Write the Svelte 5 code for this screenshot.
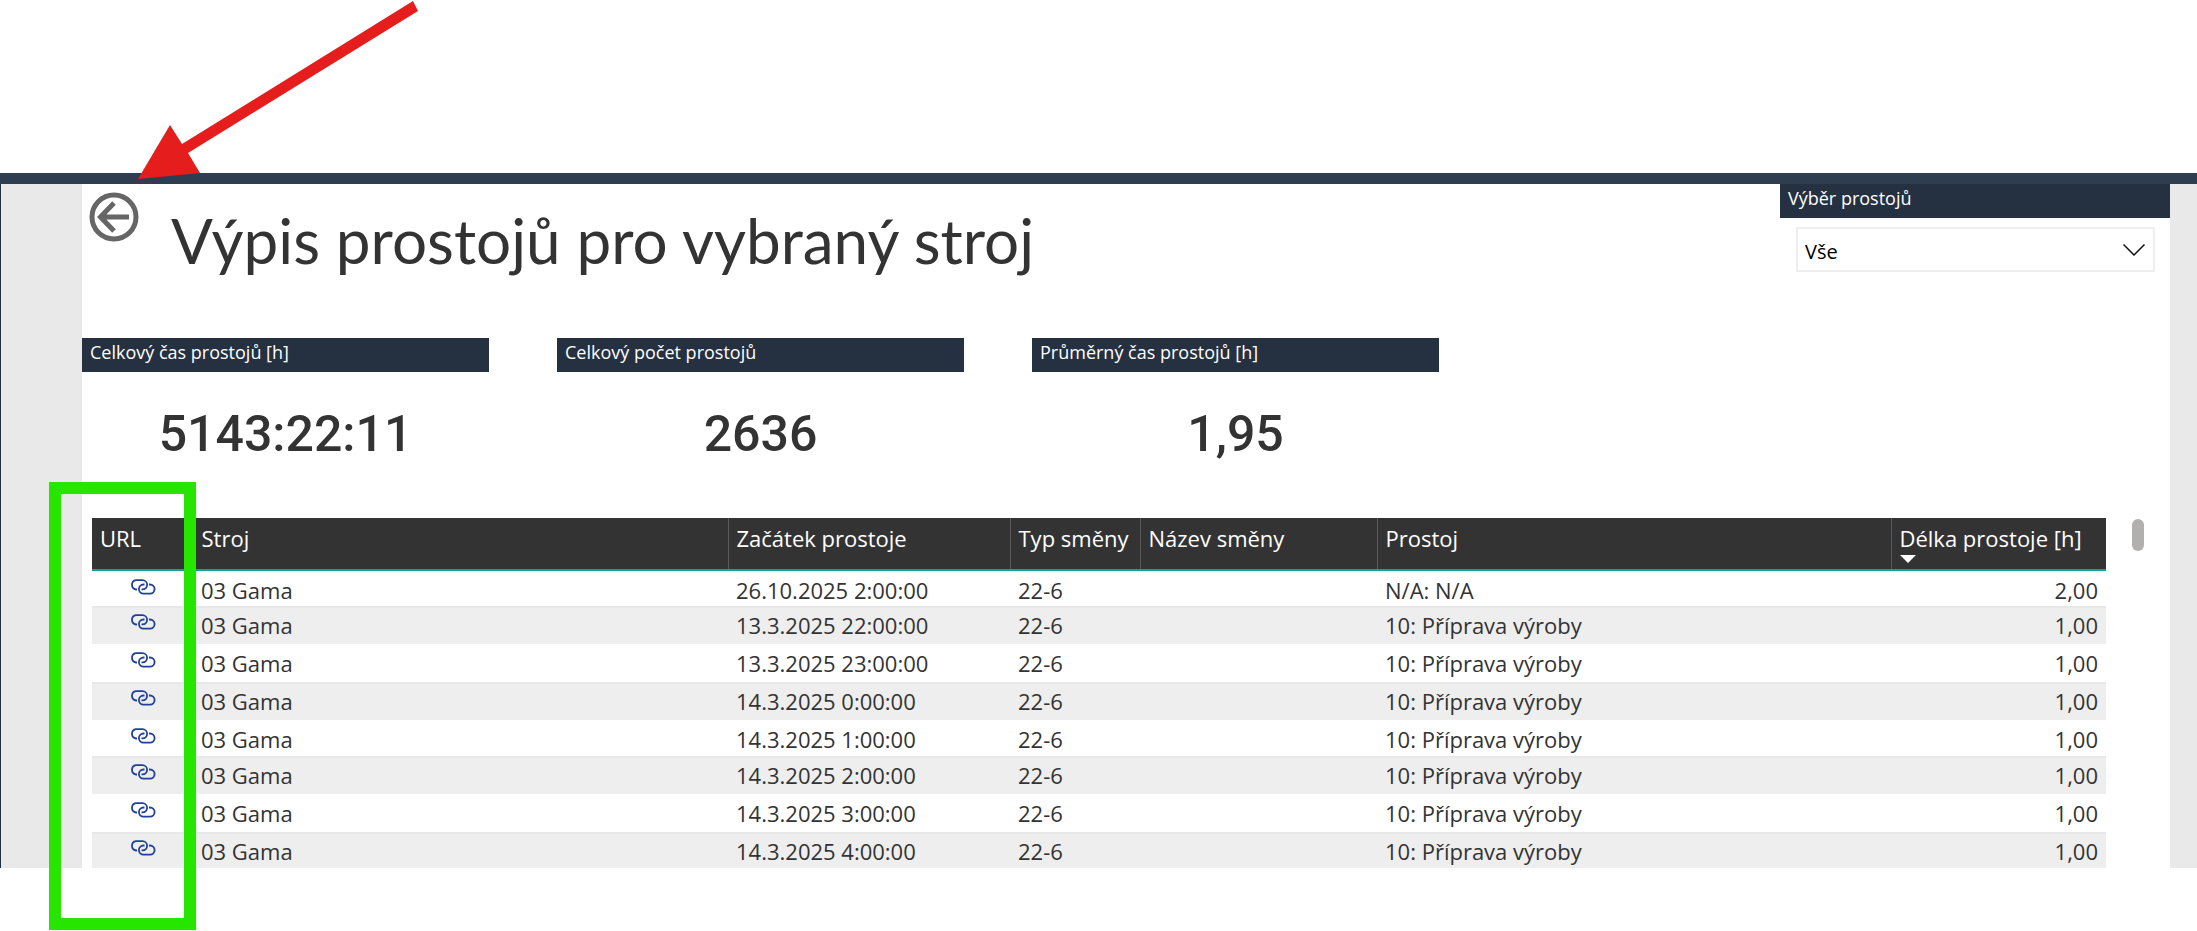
<script>
  const cards = [
    { label: "Celkový čas prostojů [h]", value: "5143:22:11" },
    { label: "Celkový počet prostojů", value: "2636" },
    { label: "Průměrný čas prostojů [h]", value: "1,95" }
  ];

  const columns = [
    { key: "url", label: "URL" },
    { key: "machine", label: "Stroj" },
    { key: "start", label: "Začátek prostoje" },
    { key: "shift", label: "Typ směny" },
    { key: "name", label: "Název směny" },
    { key: "reason", label: "Prostoj" },
    { key: "hours", label: "Délka prostoje [h]" }
  ];

  const starts = [
    "13.3.2025 22:00:00",
    "13.3.2025 23:00:00",
    "14.3.2025 0:00:00",
    "14.3.2025 1:00:00",
    "14.3.2025 2:00:00",
    "14.3.2025 3:00:00",
    "14.3.2025 4:00:00"
  ];

  const rows = [
    { start: "26.10.2025 2:00:00", reason: "N/A: N/A", hours: "2,00" },
    ...starts.map(start => ({ start, reason: "10: Příprava výroby", hours: "1,00" }))
  ];

  let selected = $state("all");
</script>

<main>
  <div class="topbar"></div>
  <div class="report">
    <section class="page">
      <header>
        <button class="back" aria-label="Zpět">
          <svg viewBox="0 0 50 50" width="50" height="50">
            <circle cx="25" cy="25" r="22" />
            <path d="M40 25H12M25 11L11.500 25L25 39" />
          </svg>
        </button>
        <h1>Výpis prostojů pro vybraný stroj</h1>
        <div class="slicer">
          <label class="bar" for="downtime">Výběr prostojů</label>
          <div class="dropdown">
            <select id="downtime" bind:value={selected}>
              <option value="all">Vše</option>
            </select>
            <svg viewBox="0 0 22 12" width="22" height="12"><path d="M.5 .5L11 11L21.500 .5" /></svg>
          </div>
        </div>
      </header>

      <div class="cards">
        {#each cards as card}
          <div class="card">
            <h2 class="bar">{card.label}</h2>
            <p>{card.value}</p>
          </div>
        {/each}
      </div>

      <div class="listing">
        <table>
          <colgroup>
            {#each columns as col}
              <col class={col.key} />
            {/each}
          </colgroup>
          <thead>
            <tr>
              {#each columns as col}
                <th>
                  <div class="heading">
                    {col.label}
                    {#if col.key === "hours"}
                      <span class="sort"></span>
                    {/if}
                  </div>
                </th>
              {/each}
            </tr>
          </thead>
          <tbody>
            {#each rows as row}
              <tr>
                <td class="link">
                  <a href="#detail" aria-label="Detail prostoje">
                    <svg viewBox="0 0 26 16" width="26" height="16">
                      <path d="M7 10.500H6A4.700 4.700 0 0 1 6 1.200H12.500A4.600 4.600 0 0 1 12.500 10.400H11.500" />
                      <path d="M19 5.500H20A4.600 4.600 0 0 1 20 14.700H13.500A4.600 4.600 0 0 1 13.500 5.500H14.500" />
                    </svg>
                  </a>
                </td>
                <td>03 Gama</td>
                <td>{row.start}</td>
                <td>22-6</td>
                <td></td>
                <td>{row.reason}</td>
                <td class="number">{row.hours}</td>
              </tr>
            {/each}
          </tbody>
        </table>
        <div class="thumb"></div>
      </div>
    </section>
  </div>

  <!-- annotations over the report -->
  <svg class="arrow" viewBox="0 0 430 190" width="430" height="190">
    <path d="M413 1L418 11L188 153L200 173L138 179L170 125L182 144Z" />
  </svg>
  <div class="highlight"></div>
</main>

<style>
  :global(body) {
    margin: 0;
    background: #fff;
  }
  main {
    position: relative;
    padding: 173px 0 62px;
    font-family: "Open Sans", "Noto Sans", sans-serif;
    color: #333;
  }
  .topbar {
    height: 11px;
    background: #2e3e50;
  }
  .report {
    padding: 0 27px 0 81px;
    border-left: 1px solid #253141;
    background: #e9e9e9;
  }
  .page {
    background: #fff;
  }
  header {
    display: flex;
    align-items: flex-start;
    height: 154px;
  }
  .back {
    margin: 8px 0 0 7px;
    padding: 0;
    border: 0;
    background: none;
    cursor: pointer;
  }
  .back svg {
    display: block;
    fill: none;
    stroke: #666;
    stroke-width: 5;
  }
  h1 {
    margin: 10px 0 0 32px;
    font-family: Lato, "Open Sans", sans-serif;
    font-size: 62px;
    line-height: 92px;
    font-weight: 400;
    white-space: nowrap;
  }
  .bar {
    display: block;
    box-sizing: border-box;
    height: 34px;
    margin: 0;
    padding: 0 8px;
    background: #253141;
    color: #fff;
    font-size: 18px;
    line-height: 28px;
    font-weight: 400;
  }
  .slicer {
    width: 390px;
    margin-left: auto;
  }
  .dropdown {
    position: relative;
    margin: 9px 15px 0 16px;
  }
  select {
    display: block;
    width: 100%;
    height: 45px;
    padding: 4px 7px 0;
    border: 2px solid #eee;
    border-radius: 0;
    appearance: none;
    background: #fff;
    color: #000;
    font-family: inherit;
    font-size: 20px;
  }
  .dropdown svg {
    position: absolute;
    top: 17px;
    right: 10px;
    fill: none;
    stroke: #111;
    stroke-width: 1.5;
    pointer-events: none;
  }
  .cards {
    display: flex;
    gap: 68px;
    height: 180px;
  }
  .card {
    width: 407px;
  }
  .card p {
    margin: 32px 0 0;
    font-family: Roboto, sans-serif;
    font-size: 50px;
    line-height: 60px;
    font-weight: 500;
    text-align: center;
  }
  .listing {
    display: flex;
    align-items: flex-start;
    padding: 0 26px 0 10px;
  }
  table {
    flex: 1;
    width: 100%;
    table-layout: fixed;
    border-collapse: collapse;
    font-size: 22px;
    line-height: 30px;
    white-space: nowrap;
  }
  col.url {
    width: 101px;
  }
  col.machine {
    width: 535px;
  }
  col.start {
    width: 282px;
  }
  col.shift {
    width: 130px;
  }
  col.name {
    width: 237px;
  }
  col.hours {
    width: 215px;
  }
  th {
    height: 51px;
    padding: 0 0 0 8px;
    border-bottom: 2px solid #15a195;
    background: #333;
    color: #fff;
    font-weight: 400;
    text-align: left;
    vertical-align: top;
  }
  th + th {
    border-left: 1px solid #5a5a5a;
  }
  .heading {
    position: relative;
    padding-top: 5px;
  }
  .sort {
    position: absolute;
    top: 37px;
    left: 0;
    border: 8px solid transparent;
    border-top-color: #fff;
    border-bottom: 0;
  }
  td {
    box-sizing: border-box;
    height: 38px;
    padding: 4px 8px 0;
    vertical-align: top;
  }
  tr:nth-child(4n + 1) td,
  tr:last-child td {
    height: 36px;
  }
  tr:nth-child(even) td {
    background: #eee;
    box-shadow: inset 0 2px #e8e8e8;
  }
  .number {
    text-align: right;
  }
  .link {
    padding: 8px 0 0 38px;
  }
  .link a,
  .link svg {
    display: block;
    width: 26px;
  }
  .link svg {
    fill: none;
    stroke: #20419a;
    stroke-width: 1.8;
  }
  .thumb {
    width: 12px;
    height: 32px;
    margin: 1px 0 0 26px;
    border-radius: 6px;
    background: #b1b0ae;
  }
  .arrow {
    position: absolute;
    top: 0;
    left: 0;
    fill: #e61d1d;
    pointer-events: none;
  }
  .highlight {
    position: absolute;
    top: 482px;
    bottom: 0;
    left: 49px;
    box-sizing: border-box;
    width: 147px;
    border: 12px solid #26e600;
    pointer-events: none;
  }
</style>
